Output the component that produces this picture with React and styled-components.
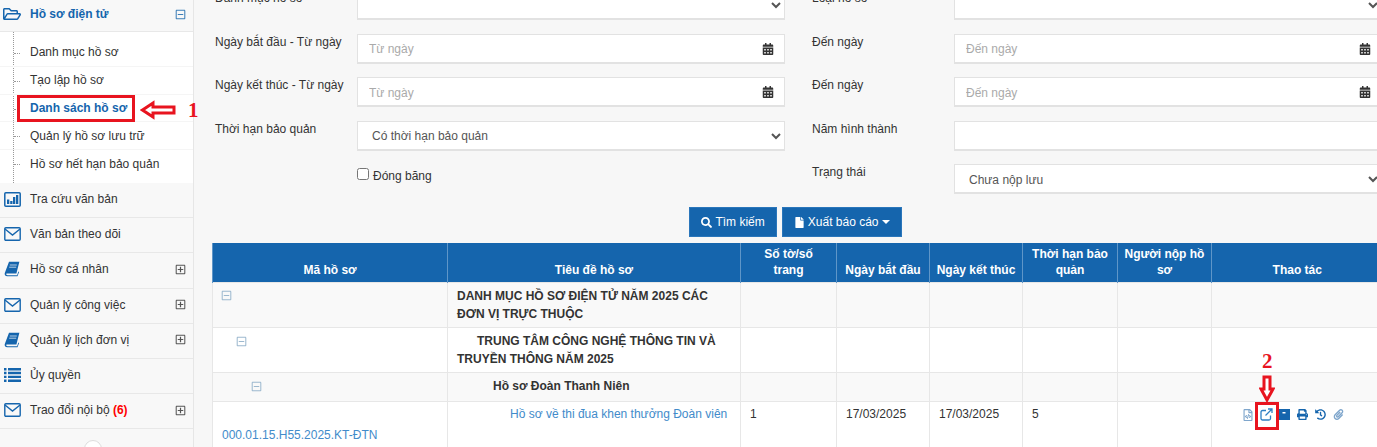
import React from 'react'
import styled, { createGlobalStyle } from 'styled-components'
import {
  FaRegFolderOpen,
  FaRegMinusSquare,
  FaRegPlusSquare,
  FaCalendarAlt,
  FaSearch,
  FaFile,
  FaRegFileCode,
  FaPrint,
  FaHistory,
  FaPaperclip,
} from 'react-icons/fa'

const BLUE = '#1565ad'
const RED = '#e8141f'

const GlobalStyle = createGlobalStyle`
  html, body {
    margin: 0;
    padding: 0;
    background: #f7f7f7;
    overflow: hidden;
  }
  * { box-sizing: border-box; }
`

const Page = styled.div`
  position: relative;
  display: flex;
  width: 1377px;
  height: 447px;
  overflow: hidden;
  font-family: 'Liberation Sans', Arial, sans-serif;
  font-size: 12px;
  color: #333;
`
const Sidebar = styled.aside`
  flex: 0 0 194px;
  margin-top: -3px;
  background: #f8f8f8;
  border-right: 1px solid #e6e6e6;
`
const MenuRow = styled.div`
  display: flex;
  align-items: center;
  height: ${(p) => (p.$head ? '35px' : '35.2px')};
  padding: 0 6px ${(p) => (p.$head ? '0' : '2px')} 3px;
  border-bottom: 1px solid #e8e8e8;
  color: ${(p) => (p.$head ? BLUE : '#333')};
  font-weight: ${(p) => (p.$head ? 'bold' : 'normal')};
`
const MenuIcon = styled.span`
  display: flex;
  justify-content: center;
  width: 18px;
  margin-right: 9px;
  color: ${BLUE};
`
const MenuText = styled.span`
  flex: 1;
`
const Count = styled.b`
  color: #f00;
`
const Toggle = styled.span`
  display: flex;
  margin-right: 1px;
  color: ${(p) => (p.$open ? '#3d7fb8' : '#555')};
  font-size: 11px;
`
const SubMenu = styled.div`
  position: relative;
  padding: 7px 0 5px;
  background: #fff;
  &::before {
    content: '';
    position: absolute;
    left: 13px;
    top: 0;
    bottom: 0;
    border-left: 1px dotted #999;
  }
`
const SubItem = styled.div`
  position: relative;
  display: flex;
  align-items: center;
  height: 27.8px;
  padding-left: 30px;
  border-bottom: ${(p) => (p.$last ? 'none' : '1px solid #f5f5f5')};
  color: ${(p) => (p.$active ? BLUE : '#333')};
  font-weight: ${(p) => (p.$active ? 'bold' : 'normal')};
  &::before {
    content: '';
    position: absolute;
    left: 14px;
    top: 14px;
    width: 6px;
    border-top: 1px dotted #999;
  }
`
const Collapse = styled.div`
  display: flex;
  justify-content: center;
  padding: 11px 7px 0 0;
`
const CollapseBtn = styled.span`
  display: flex;
  align-items: center;
  justify-content: center;
  width: 18px;
  height: 18px;
  border: 1px solid #ddd;
  border-radius: 50%;
  background: #fff;
  color: #999;
  font-size: 10px;
`
const Main = styled.main`
  flex: 1;
  min-width: 0;
  margin-top: -10px;
  padding-left: 18px;
`
const Form = styled.div`
  display: grid;
  grid-template-columns: 142px 428px 27px 142px 428px;
  row-gap: 13.5px;
  padding-left: 3px;
`
const Label = styled.label`
  grid-column: ${(p) => p.$col};
  line-height: 17px;
  white-space: nowrap;
`
const Field = styled.div`
  position: relative;
  grid-column: ${(p) => p.$col};
  height: 30px;
`
const TextInput = styled.input`
  width: 100%;
  height: 30px;
  padding: 2px 11px 0;
  border: 1px solid #e2e2e2;
  border-width: 1px 1px 2px 1px;
  background: #fff;
  outline: none;
  font: 12px 'Liberation Sans', Arial, sans-serif;
  color: #555;
  &::placeholder {
    color: #aaa;
  }
`
const Select = styled.select`
  width: 100%;
  height: 30px;
  padding: 2px 10px 0;
  border: 1px solid #e2e2e2;
  border-width: 1px 1px 2px 1px;
  border-radius: 0;
  background: #fff;
  outline: none;
  font: 12px 'Liberation Sans', Arial, sans-serif;
  color: #555;
`
const CalendarIcon = styled(FaCalendarAlt)`
  position: absolute;
  right: 11px;
  top: 9px;
  color: #333;
  font-size: 12px;
`
const CheckRow = styled.label`
  grid-column: 2;
  display: flex;
  align-items: flex-start;
  height: 30px;
  padding-top: 3px;
  gap: 4px;
  line-height: 18px;
`
const Check = styled.input`
  width: 12px;
  height: 12px;
  margin: 1px 0 0;
`
const Actions = styled.div`
  display: flex;
  justify-content: center;
  gap: 5px;
  width: 1167px;
  margin: 13px 0 6px;
`
const Button = styled.button`
  display: flex;
  align-items: center;
  gap: 3px;
  height: 30px;
  padding: 0 11px;
  border: 1px solid #2a76bb;
  border-radius: 0;
  background: ${BLUE};
  color: #fff;
  font: 12px 'Liberation Sans', Arial, sans-serif;
`
const Caret = styled.i`
  width: 0;
  height: 0;
  border-top: 4px solid #fff;
  border-left: 4px solid transparent;
  border-right: 4px solid transparent;
`
const Table = styled.table`
  table-layout: fixed;
  width: 1170px;
  border-collapse: collapse;
  font-size: 12px;
`
const HeadCell = styled.th`
  height: 39px;
  padding: 0 4px 4px;
  border-left: 1px solid #5f96c8;
  background: ${BLUE};
  color: #fff;
  font-weight: bold;
  line-height: 16px;
  text-align: center;
  vertical-align: bottom;
  white-space: pre-line;
`
const Row = styled.tr`
  background: ${(p) => (p.$striped ? '#f9f9f9' : '#fff')};
`
const Cell = styled.td`
  height: ${(p) => p.$h}px;
  padding: 4px 9px;
  border: 1px solid #e7e7e7;
  vertical-align: top;
  line-height: 18px;
`
const DataCell = styled(Cell)`
  padding-top: 3px;
`
const TreeCell = styled(Cell)`
  padding-left: ${(p) => p.$indent}px;
  padding-top: ${(p) => p.$top}px;
  color: #9db9cf;
  font-size: 11px;
`
const GroupTitle = styled.div`
  font-weight: bold;
  text-indent: ${(p) => p.$indent}px;
  color: #333;
`
const DocLink = styled.a`
  color: #428bca;
  font-size: 12px;
`
const CodeCell = styled(Cell)`
  padding-top: 24px;
`
const DocTitle = styled.div`
  text-indent: 53px;
`
const IconRow = styled.div`
  display: flex;
  align-items: center;
  height: 18px;
  margin-top: 1px;
  padding-left: 18px;
  color: ${BLUE};
  font-size: 11px;
`
const ActionSlot = styled.span`
  display: flex;
  justify-content: center;
  width: 18px;
  color: ${(p) => (p.$faint ? '#7fa6cc' : BLUE)};
  font-size: ${(p) => p.$size || 11}px;
`
const Marker = styled.div`
  position: absolute;
  left: ${(p) => p.$x}px;
  top: ${(p) => p.$y}px;
  width: ${(p) => p.$w}px;
  height: ${(p) => p.$h}px;
  border: 3px solid ${RED};
`
const Number = styled.span`
  position: absolute;
  left: ${(p) => p.$x}px;
  top: ${(p) => p.$y}px;
  color: ${RED};
  font: bold 21px/24px 'Liberation Serif', serif;
`
const Arrow = styled.svg`
  position: absolute;
  left: ${(p) => p.$x}px;
  top: ${(p) => p.$y}px;
`

const Envelope = () => (
  <svg width="17" height="14" viewBox="0 0 17 14" fill="none" stroke={BLUE} strokeWidth="1.4">
    <rect x="0.8" y="0.8" width="15.4" height="12.4" rx="1" />
    <path d="M1 2l7.5 6L16 2" />
  </svg>
)

const ChartBox = () => (
  <svg width="17" height="15" viewBox="0 0 17 15">
    <rect x="0.8" y="0.8" width="15.4" height="13.4" rx="1" fill="none" stroke={BLUE} strokeWidth="1.5" />
    <path fill={BLUE} d="M3 7.500h2.300V12H3zM6.200 9h2.300v3H6.200zM9 5h2.300v7H9zM12 3h2.300v9H12z" />
  </svg>
)

const Book = () => (
  <svg width="16" height="16" viewBox="0 0 16 16">
    <path fill={BLUE} d="M5 .8h10.400l-.3 1L12.400 12.600H3.200c-.9 0-1.100.6-.9 1 .2.5.7.7 1.300.7h9.500l1.300-3.800.7.5-1.600 4.200H3.200C1.600 15.200.4 14 .7 12.200z" />
    <path stroke="#fff" strokeWidth="0.7" d="M5.800 4h7M5.200 6.200h7" />
  </svg>
)

const ListLines = () => (
  <svg width="17" height="14" viewBox="0 0 17 14">
    <path fill={BLUE} d="M0 0h2.500v2.400H0zM4 0h13v2.400H4zM0 3.800h2.500v2.400H0zM4 3.800h13v2.400H4zM0 7.700h2.500v2.400H0zM4 7.700h13v2.400H4zM0 11.600h2.500V14H0zM4 11.600h13V14H4z" />
  </svg>
)

const ExternalSquare = () => (
  <svg width="13" height="13" viewBox="0 0 13 13" fill="none" stroke="#2f80c4" strokeWidth="1.3">
    <path d="M10.500 7.500v3a1.500 1.500 0 0 1-1.500 1.500H2.500A1.500 1.500 0 0 1 1 10.500V4a1.500 1.500 0 0 1 1.500-1.500H6" />
    <path d="M5.500 7.500L11.500 1.500M8 1h4v4" />
  </svg>
)

const ArchiveBox = () => (
  <svg width="12" height="11" viewBox="0 0 12 11">
    <path fill={BLUE} fillRule="evenodd" d="M0 0h12v11H0zM4.500 3v1.500h3V3z" />
  </svg>
)

const App = () => {
  const menu = [
    { icon: <ChartBox />, text: 'Tra cứu văn bản' },
    { icon: <Envelope />, text: 'Văn bản theo dõi' },
    { icon: <Book />, text: 'Hồ sơ cá nhân', toggle: true },
    { icon: <Envelope />, text: 'Quản lý công việc', toggle: true },
    { icon: <Book />, text: 'Quản lý lịch đơn vị', toggle: true },
    { icon: <ListLines />, text: 'Ủy quyền' },
    { icon: <Envelope />, text: 'Trao đổi nội bộ', count: '(6)', toggle: true },
  ]
  const sub = ['Danh mục hồ sơ', 'Tạo lập hồ sơ', 'Danh sách hồ sơ', 'Quản lý hồ sơ lưu trữ', 'Hồ sơ hết hạn bảo quản']
  const widths = [235, 293, 96, 93, 93, 95, 94, 171]
  const heads = ['Mã hồ sơ', 'Tiêu đề hồ sơ', 'Số tờ/số\ntrang', 'Ngày bắt đầu', 'Ngày kết thúc', 'Thời hạn bảo\nquản', 'Người nộp hồ\nsơ', 'Thao tác']
  const groups = [
    { h: 45, indent: 8, top: 5, text: 'DANH MỤC HỒ SƠ ĐIỆN TỬ NĂM 2025 CÁC ĐƠN VỊ TRỰC THUỘC', titleIndent: 0, striped: true },
    { h: 45, indent: 23, top: 6, text: 'TRUNG TÂM CÔNG NGHỆ THÔNG TIN VÀ TRUYỀN THÔNG NĂM 2025', titleIndent: 20 },
    { h: 27, indent: 38, top: 6, text: 'Hồ sơ Đoàn Thanh Niên', titleIndent: 36, striped: true },
  ]

  return (
    <Page>
      <GlobalStyle />
      <Sidebar>
        <MenuRow $head>
          <MenuIcon>
            <FaRegFolderOpen size={18} />
          </MenuIcon>
          <MenuText>Hồ sơ điện tử</MenuText>
          <Toggle $open>
            <FaRegMinusSquare />
          </Toggle>
        </MenuRow>
        <SubMenu>
          {sub.map((s, i) => (
            <SubItem key={s} $active={i === 2} $last={i === 4}>
              {s}
            </SubItem>
          ))}
        </SubMenu>
        {menu.map((m) => (
          <MenuRow key={m.text}>
            <MenuIcon>{m.icon}</MenuIcon>
            <MenuText>
              {m.text} {m.count && <Count>{m.count}</Count>}
            </MenuText>
            {m.toggle && (
              <Toggle>
                <FaRegPlusSquare />
              </Toggle>
            )}
          </MenuRow>
        ))}
        <Collapse>
          <CollapseBtn>«</CollapseBtn>
        </Collapse>
      </Sidebar>

      <Main>
        <Form>
          <Label $col={1}>Danh mục hồ sơ</Label>
          <Field $col={2}>
            <Select />
          </Field>
          <Label $col={4}>Loại hồ sơ</Label>
          <Field $col={5}>
            <Select />
          </Field>

          <Label $col={1}>Ngày bắt đầu - Từ ngày</Label>
          <Field $col={2}>
            <TextInput placeholder="Từ ngày" />
            <CalendarIcon />
          </Field>
          <Label $col={4}>Đến ngày</Label>
          <Field $col={5}>
            <TextInput placeholder="Đến ngày" />
            <CalendarIcon />
          </Field>

          <Label $col={1}>Ngày kết thúc - Từ ngày</Label>
          <Field $col={2}>
            <TextInput placeholder="Từ ngày" />
            <CalendarIcon />
          </Field>
          <Label $col={4}>Đến ngày</Label>
          <Field $col={5}>
            <TextInput placeholder="Đến ngày" />
            <CalendarIcon />
          </Field>

          <Label $col={1}>Thời hạn bảo quản</Label>
          <Field $col={2}>
            <Select defaultValue="co">
              <option value="co">Có thời hạn bảo quản</option>
            </Select>
          </Field>
          <Label $col={4}>Năm hình thành</Label>
          <Field $col={5}>
            <TextInput />
          </Field>

          <CheckRow>
            <Check type="checkbox" />
            Đóng băng
          </CheckRow>
          <Label $col={4}>Trạng thái</Label>
          <Field $col={5}>
            <Select defaultValue="chua">
              <option value="chua">Chưa nộp lưu</option>
            </Select>
          </Field>
        </Form>

        <Actions>
          <Button>
            <FaSearch size={11} />
            Tìm kiếm
          </Button>
          <Button>
            <FaFile size={11} />
            Xuất báo cáo
            <Caret />
          </Button>
        </Actions>

        <Table>
          <colgroup>
            {widths.map((w, i) => (
              <col key={i} width={w} />
            ))}
          </colgroup>
          <thead>
            <tr>
              {heads.map((h) => (
                <HeadCell key={h}>{h}</HeadCell>
              ))}
            </tr>
          </thead>
          <tbody>
            {groups.map((g) => (
              <Row key={g.text} $striped={g.striped}>
                <TreeCell $h={g.h} $indent={g.indent} $top={g.top}>
                  <FaRegMinusSquare />
                </TreeCell>
                <Cell $h={g.h}>
                  <GroupTitle $indent={g.titleIndent}>{g.text}</GroupTitle>
                </Cell>
                {[0, 1, 2, 3, 4, 5].map((c) => (
                  <Cell key={c} $h={g.h} />
                ))}
              </Row>
            ))}
            <Row>
              <CodeCell $h={60}>
                <DocLink>000.01.15.H55.2025.KT-ĐTN</DocLink>
              </CodeCell>
              <DataCell $h={60}>
                <DocTitle>
                  <DocLink>Hồ sơ về thi đua khen thưởng Đoàn viên</DocLink>
                </DocTitle>
              </DataCell>
              <DataCell $h={60}>1</DataCell>
              <DataCell $h={60}>17/03/2025</DataCell>
              <DataCell $h={60}>17/03/2025</DataCell>
              <DataCell $h={60}>5</DataCell>
              <DataCell $h={60} />
              <DataCell $h={60}>
                <IconRow>
                  <ActionSlot $faint $size={12}>
                    <FaRegFileCode />
                  </ActionSlot>
                  <ActionSlot>
                    <ExternalSquare />
                  </ActionSlot>
                  <ActionSlot>
                    <ArchiveBox />
                  </ActionSlot>
                  <ActionSlot>
                    <FaPrint />
                  </ActionSlot>
                  <ActionSlot>
                    <FaHistory />
                  </ActionSlot>
                  <ActionSlot $faint>
                    <FaPaperclip />
                  </ActionSlot>
                </IconRow>
              </DataCell>
            </Row>
          </tbody>
        </Table>
      </Main>

      <Marker $x={17} $y={95} $w={118} $h={27} />
      <Arrow $x={140} $y={100} width="36" height="20" viewBox="0 0 36 20">
        <path d="M2.500 10L13 3V7H34V13H13V17Z" fill="#fff" stroke={RED} strokeWidth="3" />
      </Arrow>
      <Number $x={188} $y={98}>1</Number>

      <Marker $x={1255} $y={402} $w={24} $h={28} />
      <Arrow $x={1259} $y={375} width="16" height="27" viewBox="0 0 16 27">
        <path d="M8 25L2 14H5V2H11V14H14Z" fill="#fff" stroke={RED} strokeWidth="3" />
      </Arrow>
      <Number $x={1262} $y={349}>2</Number>
    </Page>
  )
}

export default App
